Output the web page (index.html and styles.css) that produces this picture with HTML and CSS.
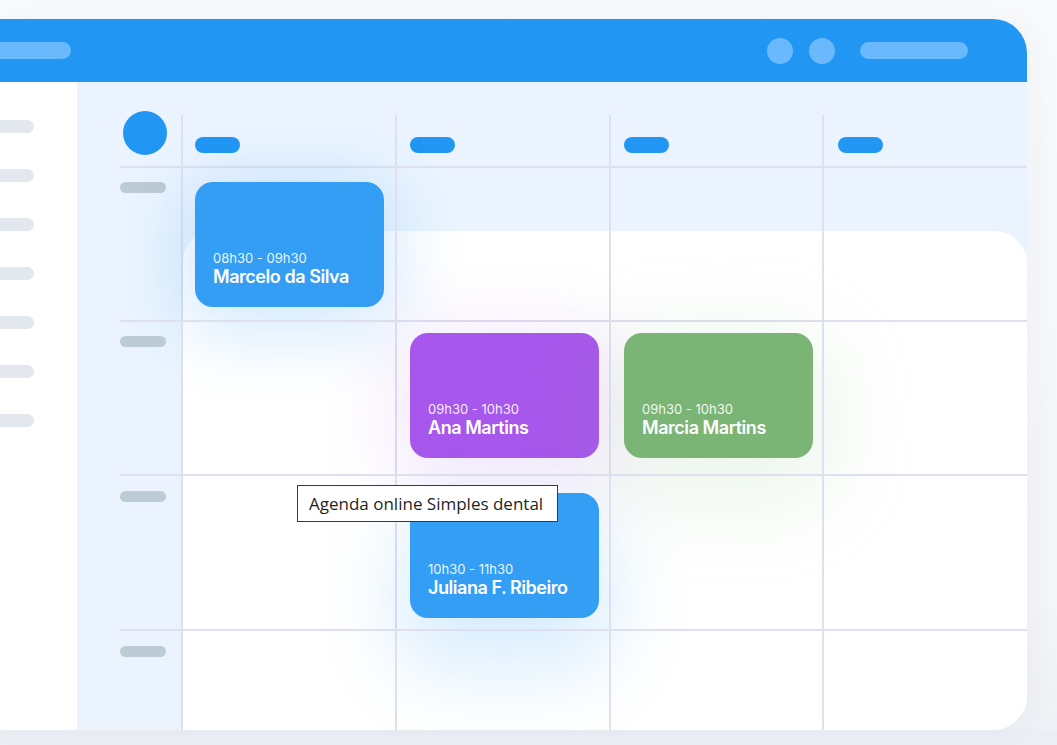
FILE: index.html
```html
<!DOCTYPE html>
<html lang="pt-BR">
<head>
<meta charset="utf-8">
<title>Agenda online Simples dental</title>
<link rel="stylesheet" href="styles.css">
</head>
<body>
<div class="page">
  <div class="window">
    <div class="topbar">
      <span class="tb-pill tb-pill--left"></span>
      <div class="tb-right">
        <span class="tb-dot"></span>
        <span class="tb-dot"></span>
        <span class="tb-pill tb-pill--right"></span>
      </div>
    </div>
    <div class="body">
      <aside class="sidebar">
        <span class="sb-pill"></span>
        <span class="sb-pill"></span>
        <span class="sb-pill"></span>
        <span class="sb-pill"></span>
        <span class="sb-pill"></span>
        <span class="sb-pill"></span>
        <span class="sb-pill"></span>
      </aside>
      <main class="main">
        <div class="panel"></div>
        <div class="grid">
          <!-- header -->
          <div class="cell cell--label cell--head"><span class="avatar"></span></div>
          <div class="cell cell--head"><span class="head-pill head-pill--first"></span></div>
          <div class="cell cell--head"><span class="head-pill"></span></div>
          <div class="cell cell--head"><span class="head-pill"></span></div>
          <div class="cell cell--head"><span class="head-pill head-pill--last"></span></div>
          <!-- row 1 -->
          <div class="cell cell--label cell--row"><span class="row-pill"></span></div>
          <div class="cell cell--row">
            <div class="card card--blue card--r1">
              <span class="card-time">08h30 - 09h30</span>
              <span class="card-name">Marcelo da Silva</span>
            </div>
          </div>
          <div class="cell cell--row"></div>
          <div class="cell cell--row"></div>
          <div class="cell cell--row"></div>
          <!-- row 2 -->
          <div class="cell cell--label cell--row"><span class="row-pill"></span></div>
          <div class="cell cell--row"></div>
          <div class="cell cell--row">
            <div class="card card--purple card--r2">
              <span class="card-time">09h30 - 10h30</span>
              <span class="card-name">Ana Martins</span>
            </div>
          </div>
          <div class="cell cell--row">
            <div class="card card--green card--r2">
              <span class="card-time">09h30 - 10h30</span>
              <span class="card-name">Marcia Martins</span>
            </div>
          </div>
          <div class="cell cell--row"></div>
          <!-- row 3 -->
          <div class="cell cell--label cell--row"><span class="row-pill row-pill--low"></span></div>
          <div class="cell cell--row"></div>
          <div class="cell cell--row">
            <div class="card card--blue card--glow-down card--r3">
              <span class="card-time">10h30 - 11h30</span>
              <span class="card-name">Juliana F. Ribeiro</span>
            </div>
          </div>
          <div class="cell cell--row"></div>
          <div class="cell cell--row"></div>
          <!-- row 4 -->
          <div class="cell cell--label cell--row"><span class="row-pill row-pill--low"></span></div>
          <div class="cell cell--row"></div>
          <div class="cell cell--row"></div>
          <div class="cell cell--row"></div>
          <div class="cell cell--row"></div>
        </div>
      </main>
    </div>
  </div>
  <div class="tooltip">Agenda online Simples dental</div>
</div>
</body>
</html>
```

FILE: styles.css
```css
* { box-sizing: border-box; }

html, body {
  margin: 0;
  height: 745px;
  overflow: hidden;
}

body {
  background: linear-gradient(180deg, #f9fafb 0px, #f5f6f9 600px, #eef1f5 729px, #ebeff4 731px, #ebeff4 745px);
  font-family: Inter, "Noto Sans", sans-serif;
}

.page {
  position: relative;
  padding-top: 19px;
  height: 745px;
}

.window {
  width: 1027px;
  height: 711px;
  border-radius: 0 34px 34px 0;
  overflow: hidden;
  display: flex;
  flex-direction: column;
  box-shadow: 8px 0 30px rgba(40, 60, 90, 0.04);
  background: #ffffff;
}

/* top bar */
.topbar {
  height: 63px;
  flex: 0 0 63px;
  background: #2196f3;
  display: flex;
  align-items: center;
  justify-content: space-between;
  padding-right: 59px;
}

.tb-pill {
  display: block;
  height: 17px;
  background: #69b9fc;
  border-radius: 9px;
}

.tb-pill--left {
  width: 71px;
  border-radius: 0 9px 9px 0;
}

.tb-pill--right {
  width: 108px;
  margin-left: 9px;
}

.tb-right {
  display: flex;
  align-items: center;
  gap: 16px;
}

.tb-dot {
  display: block;
  width: 26px;
  height: 26px;
  border-radius: 50%;
  background: #69b9fc;
}

/* body */
.body {
  flex: 1;
  display: flex;
  min-height: 0;
}

.sidebar {
  width: 77px;
  flex: 0 0 77px;
  background: #ffffff;
  display: flex;
  flex-direction: column;
  gap: 36px;
  padding-top: 38px;
}

.sb-pill {
  display: block;
  width: 34px;
  height: 13px;
  border-radius: 0 7px 7px 0;
  background: #e2e8ee;
}

.main {
  position: relative;
  flex: 1;
  background: #ebf4fe;
  padding: 33px 0 0 43px;
}

.panel {
  position: absolute;
  left: 106px;
  top: 149px;
  right: 0;
  bottom: 0;
  background: #ffffff;
  border-radius: 30px 33px 0 0;
}

.grid {
  position: relative;
  z-index: 1;
  display: grid;
  grid-template-columns: 61px 214px 214px 213px 1fr;
  grid-template-rows: 51px 154px 154px 155px 1fr;
  height: 100%;
}

.cell {
  border-left: 2px solid #dfe0ef;
  padding-left: 13px;
}

.cell--label {
  border-left: none;
  padding-left: 0;
}

.cell--row {
  border-top: 2px solid #dfe0ef;
}

.avatar {
  display: block;
  width: 44px;
  height: 44px;
  margin: -4px 0 0 3px;
  border-radius: 50%;
  background: #2196f3;
}

.head-pill {
  display: block;
  width: 45px;
  height: 16px;
  margin-top: 22px;
  border-radius: 8px;
  background: #2196f3;
}

.head-pill--first { margin-left: -1px; }
.head-pill--last { margin-left: 1px; }

.row-pill {
  display: block;
  width: 46px;
  height: 11px;
  margin-top: 14px;
  border-radius: 6px;
  background: #bdcbd4;
}

.row-pill--low { margin-top: 15px; }

/* cards */
.card {
  width: 189px;
  height: 125px;
  border-radius: 18px;
  display: flex;
  flex-direction: column;
  justify-content: flex-end;
  padding: 0 18px 19px;
  color: #ffffff;
}

.card--r1 { margin-top: 14px; margin-left: -1px; }
.card--r2 { margin-top: 11px; }
.card--r3 { margin-top: 17px; }

.card--blue {
  background: #349ef4;
  box-shadow: 0 14px 70px 12px rgba(33, 150, 243, 0.2);
}

.card--glow-down {
  box-shadow: 0 40px 80px 10px rgba(33, 150, 243, 0.18);
}

.card--purple {
  background: #a857ec;
  box-shadow: 0 14px 80px 14px rgba(168, 87, 236, 0.14);
}

.card--green {
  background: #7ab576;
  box-shadow: 0 24px 90px 20px rgba(122, 181, 118, 0.14);
}

.card-time {
  font-size: 13px;
  line-height: 16px;
  font-weight: 400;
  color: rgba(255, 255, 255, 0.92);
}

.card-name {
  font-size: 18px;
  line-height: 22px;
  font-weight: 600;
  letter-spacing: -0.45px;
}

/* tooltip */
.tooltip {
  position: absolute;
  z-index: 10;
  left: 297px;
  top: 485px;
  width: 261px;
  height: 37px;
  padding: 0 0 0 11px;
  background: #ffffff;
  border: 1px solid #3a3a3a;
  font-family: "Open Sans", "Noto Sans", sans-serif;
  font-size: 17px;
  line-height: 35px;
  color: #1f1f1f;
  white-space: nowrap;
}
```
